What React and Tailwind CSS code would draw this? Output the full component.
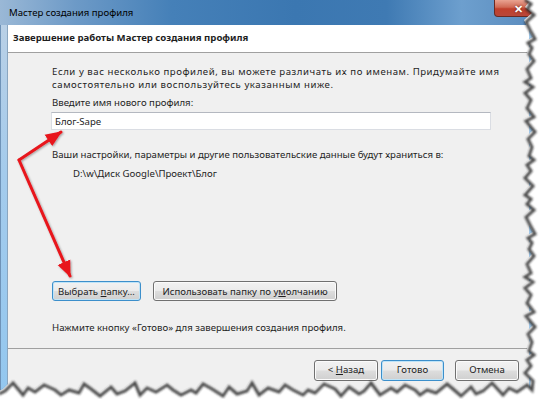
import React from 'react'

// torn-paper edge on the right and bottom of the screenshot
const OFFS = [0, 6, 2, 9, 1, 5, 10, 3, 7, 4, 9, 2, 6, 0, 8]
const rightEdge = () => {
  const pts = []
  let y = -2
  let i = 0
  while (y < 386) {
    pts.push([523 + OFFS[i % OFFS.length], y])
    y += 4 + ((i * 7) % 6)
    i++
  }
  return pts
}
const bottomEdge = () => {
  const pts = []
  let x = 530
  let i = 0
  const b = [0, -5, 2, -2, 5, -7, 1, 4, -3, 6, -1, -6, 3, 0, 5]
  while (x > -4) {
    pts.push([x, 388 + b[i % b.length]])
    x -= 5 + ((i * 5) % 7)
    i++
  }
  return pts
}

function TornEdge() {
  const edge = [...rightEdge(), ...bottomEdge()]
  const line = edge.map(p => p.join(',')).join(' ')
  const shadow = edge.map(([x, y]) => `${x + 2},${y + 2}`).join(' ')
  const fill = `${line} -4,399 -4,404 544,404 544,-4`
  return (
    <svg className="absolute inset-0 pointer-events-none" width="540" height="399">
      <defs>
        <filter id="blur" x="-5%" y="-5%" width="110%" height="110%">
          <feGaussianBlur stdDeviation="1.3" />
        </filter>
      </defs>
      <polygon points={fill} fill="#fff" />
      <polyline points={shadow} fill="none" stroke="#2a2a2a" strokeWidth="3" opacity="0.85" filter="url(#blur)" />
    </svg>
  )
}

function Arrows() {
  return (
    <svg className="absolute inset-0 pointer-events-none" width="540" height="399">
      <defs>
        <marker id="head" viewBox="0 0 12 10" refX="11" refY="5" markerWidth="5.5" markerHeight="5" orient="auto" markerUnits="strokeWidth">
          <path d="M0 0 L12 5 L0 10 Z" fill="#e8141c" />
        </marker>
        <filter id="ds" x="-20%" y="-20%" width="140%" height="140%">
          <feDropShadow dx="1" dy="1" stdDeviation="0.8" floodColor="#000" floodOpacity="0.35" />
        </filter>
      </defs>
      <g filter="url(#ds)" stroke="#e8141c" strokeWidth="3" fill="none" strokeLinecap="round">
        <line x1="19" y1="160" x2="61" y2="132" markerEnd="url(#head)" />
        <line x1="19" y1="160" x2="70" y2="276" markerEnd="url(#head)" />
      </g>
    </svg>
  )
}

function Btn({ children, primary, className = '' }) {
  return (
    <div
      className={`flex items-center justify-center whitespace-nowrap rounded-[3px] border text-[9.6px] text-[#1e1e1e] bg-[linear-gradient(#f2f2f2_0%,#ebebeb_48%,#dddddd_52%,#cfcfcf_100%)] ${
        primary
          ? 'border-[#3c8fcb] shadow-[inset_0_0_0_1px_#bfe4f8]'
          : 'border-[#707070] shadow-[inset_0_0_0_1px_#fbfbfb]'
      } ${className}`}
    >
      {children}
    </div>
  )
}

export default function App() {
  return (
    <div className="relative w-[540px] h-[399px] overflow-hidden bg-white font-['Noto_Sans',sans-serif] text-[#1e1e1e]">
      <div className="flex flex-col w-[537px] h-[396px]">
        {/* title bar */}
        <div className="flex items-start justify-between h-[25px] bg-[linear-gradient(90deg,#9ab8d6_0%,#6d9ac7_14%,#4580b8_32%,#3b77b1_55%,#3f7ab3_72%,#6d9fce_86%,#5a8bbd_100%)]">
          <span className="pl-[9px] pt-[5px] text-[9.6px] leading-[16px] text-black">Мастер создания профиля</span>
          <div className="w-[43px] h-[17px] rounded-bl-[4px] border border-t-0 border-[#6b2a22] bg-[linear-gradient(#e9a391_0%,#d06a55_45%,#c1402c_55%,#b8473a_100%)] flex items-center pl-[19px]">
            <span className="text-[11px] leading-none font-bold text-white [text-shadow:0_0_2px_#5a1a10]">✕</span>
          </div>
        </div>

        <div className="flex flex-1">
          {/* left frame */}
          <div className="w-[8px] border-l border-l-[#6f93b8] border-r border-r-[#8aa6c0] bg-[linear-gradient(#b9d0e6,#a4cbec_40%,#93c7ef)]" />

          <div className="flex flex-col flex-1">
            <div className="h-[28px] bg-white border-b border-[#a0a0a0] flex items-center pl-[5px]">
              <span className="text-[9.6px] font-bold">Завершение работы Мастер создания профиля</span>
            </div>

            <div className="h-[296px] bg-[#f0f0f0] pl-[44px] pt-[12px] text-[9.6px] leading-[13px] border-b border-[#a0a0a0]">
              <p className="tracking-[0.55px] whitespace-nowrap">Если у вас несколько профилей, вы можете различать их по именам. Придумайте имя</p>
              <p className="tracking-[0.55px]">самостоятельно или воспользуйтесь указанным ниже.</p>
              <p className="mt-[5px]">Введите имя нового профиля:</p>
              <div className="mt-[3px] ml-[-1px] w-[440px] h-[18px] bg-white border border-[#dadde3] border-t-[#b4b8c0] flex items-center pl-[3px]">
                Блог-Sape
              </div>
              <p className="mt-[18px]">Ваши настройки, параметры и другие пользовательские данные будут храниться в:</p>
              <p className="mt-[6px] pl-[21px]">D:\w\Диск Google\Проект\Блог</p>
              <div className="flex gap-[12px] mt-[101px]">
                <Btn primary className="w-[89px] h-[20px]">
                  Выбрать&nbsp;<span className="underline">п</span>апку...
                </Btn>
                <Btn className="w-[184px] h-[20px]">
                  Использовать папку по у<span className="underline">м</span>олчанию
                </Btn>
              </div>
              <p className="mt-[20px]">Нажмите кнопку «Готово» для завершения создания профиля.</p>
            </div>

            <div className="flex-1 bg-[#f0f0f0] flex justify-end items-start pt-[11px] pr-[10px]">
              <Btn className="w-[64px] h-[21px]">
                &lt;&nbsp;<span className="underline">Н</span>азад
              </Btn>
              <Btn primary className="w-[63px] h-[21px] ml-[3px]">Готово</Btn>
              <Btn className="w-[64px] h-[21px] ml-[11px]">Отмена</Btn>
            </div>
          </div>

          <div className="w-[8px] bg-[#a4cbec]" />
        </div>
      </div>

      <Arrows />
      <TornEdge />
    </div>
  )
}
